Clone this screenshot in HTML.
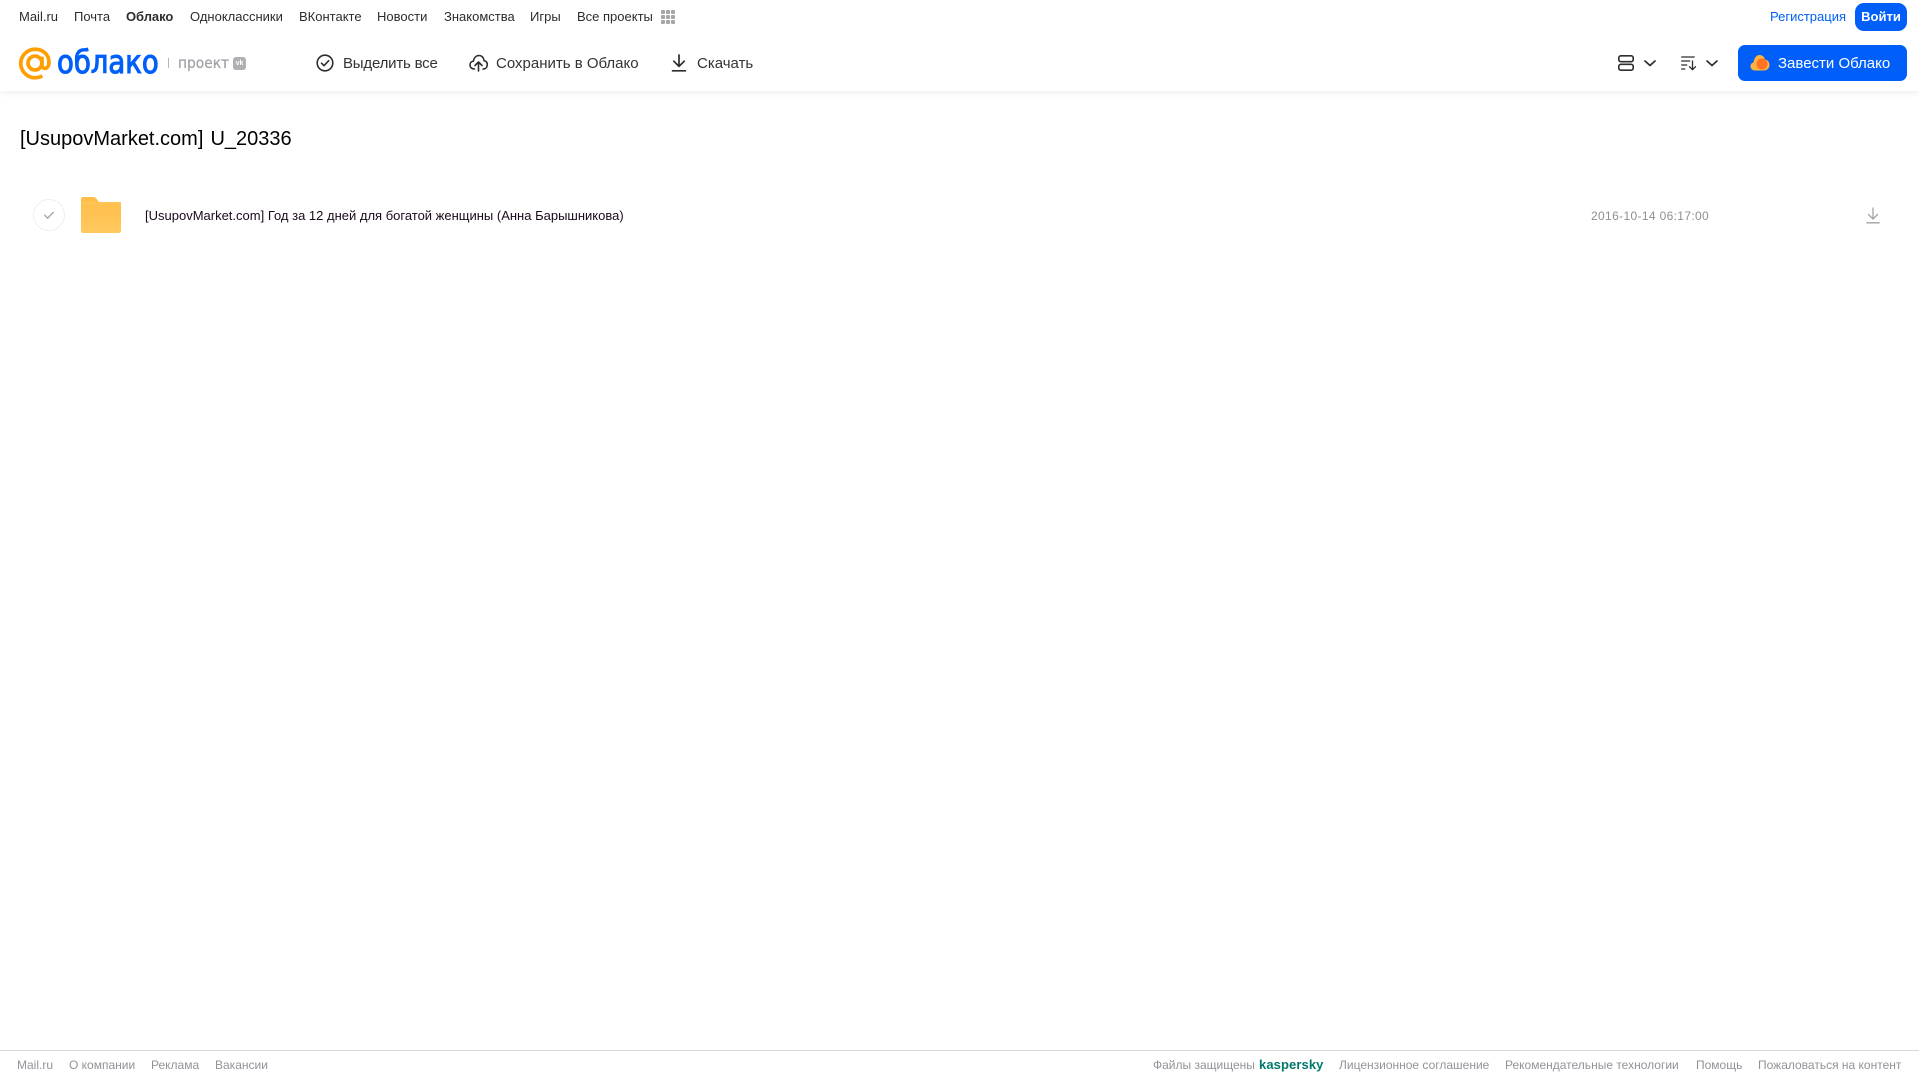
<!DOCTYPE html>
<html lang="ru">
<head>
<meta charset="utf-8">
<title>Облако</title>
<style>
html,body{margin:0;padding:0;background:#fff}
body{position:relative;width:1919px;height:1079px;overflow:hidden;font-family:"Liberation Sans","DejaVu Sans",sans-serif}
.t{position:absolute;white-space:nowrap;line-height:20px}
.n{top:7px;font-size:13px;color:#2c2d2e}
.a{top:54px;font-size:15px;color:#333}
.f{top:1055px;font-size:12px;color:#919399}
svg{position:absolute;overflow:visible}
#hd{position:absolute;left:0;top:0;width:1919px;height:91px;background:#fff;box-shadow:0 2px 6px rgba(0,0,0,.07)}
#fl{position:absolute;left:0;top:1050px;width:1919px;height:1px;background:#d8d8d8}
.b{position:absolute;background:#005ff9}
</style>
</head>
<body>
<div id="hd"></div>

<div class="t n" style="left:19px">Mail.ru</div>
<div class="t n" style="left:74px">Почта</div>
<div class="t n" style="left:126px;font-weight:bold;letter-spacing:-.05px">Облако</div>
<div class="t n" style="left:190px">Одноклассники</div>
<div class="t n" style="left:299px">ВКонтакте</div>
<div class="t n" style="left:377px">Новости</div>
<div class="t n" style="left:444px">Знакомства</div>
<div class="t n" style="left:530px">Игры</div>
<div class="t n" style="left:577px">Все проекты</div>
<svg style="left:661px;top:10px" width="14" height="14" fill="#a6a6a6"><rect width="4" height="4" rx="1"/><rect x="5" width="4" height="4" rx="1"/><rect x="10" width="4" height="4" rx="1"/><rect y="5" width="4" height="4" rx="1"/><rect x="5" y="5" width="4" height="4" rx="1"/><rect x="10" y="5" width="4" height="4" rx="1"/><rect y="10" width="4" height="4" rx="1"/><rect x="5" y="10" width="4" height="4" rx="1"/><rect x="10" y="10" width="4" height="4" rx="1"/></svg>

<svg style="left:19px;top:47px" width="32" height="33" viewBox="0 0 33 33" fill="none" stroke="#ff9e00" stroke-width="3.800"><circle cx="16.500" cy="16" r="7.200"/><path d="M23.700 9.500v8.500c0 5 7 5 7.200-2.500C31 7 24.500 1.800 16.500 1.800 8.500 1.800 1.800 8.500 1.800 16.500s6.700 14.700 14.700 14.700c2.800 0 5.300-.7 7.500-2"/></svg>
<div class="t" style="left:57px;top:43px;line-height:38px;font-size:32px;color:#005ff9;font-family:'DejaVu Sans',sans-serif;-webkit-text-stroke:1.100px #005ff9;transform-origin:0 50%;transform:scaleX(.86)">облако</div>
<div style="position:absolute;left:168px;top:58px;width:1px;height:10px;background:#b5b5b5"></div>
<div class="t" style="left:178px;top:53px;font-size:15px;color:#a2a4a9;font-family:'DejaVu Sans',sans-serif;-webkit-text-stroke:.3px #a2a4a9;transform-origin:0 50%;transform:scaleX(.92)">проект</div>
<div style="position:absolute;left:233px;top:57px;width:13px;height:13px;border-radius:3px;background:#aeb0b4"></div>
<div class="t" style="left:233px;top:57px;width:13px;line-height:13px;font-size:7px;font-weight:bold;color:#fff;text-align:center">vk</div>

<svg style="left:316px;top:54px" width="18" height="18" viewBox="0 0 18 18" fill="none" stroke="#2c2d2e" stroke-width="1.600"><circle cx="9" cy="9" r="7.800"/><path d="M5.500 9.200l2.500 2.500 4.700-5" stroke-linecap="round" stroke-linejoin="round"/></svg>
<div class="t a" style="left:343px;letter-spacing:-.2px">Выделить все</div>

<svg style="left:469px;top:54px" width="19" height="18" viewBox="0 0 19 18" fill="none" stroke="#2c2d2e" stroke-width="1.600" stroke-linecap="round" stroke-linejoin="round"><path d="M5.500 15C2.800 15 1 13.300 1 11c0-2.200 1.500-3.600 3.300-3.800C5 4 7 1.500 9.800 1.500c3 0 5 2.200 5.300 5.200 2 .4 3.200 2 3.200 4 0 2.300-1.500 4.300-4.300 4.300"/><path d="M9.500 17V8.500M6 11.500l3.500-3.500 3.500 3.500"/></svg>
<div class="t a" style="left:496px">Сохранить в Облако</div>

<svg style="left:671px;top:54px" width="16" height="18" viewBox="0 0 16 18" fill="none" stroke="#2c2d2e" stroke-width="1.700" stroke-linecap="round" stroke-linejoin="round"><path d="M8 1v11M2.800 7.200L8 12.400l5.200-5.200M1.500 16.800h13"/></svg>
<div class="t a" style="left:697px">Скачать</div>

<svg style="left:1618px;top:55px" width="16" height="16" viewBox="0 0 16 16" fill="none" stroke="#2c2d2e" stroke-width="1.600"><rect x=".8" y=".8" width="14.400" height="5.900" rx="2"/><rect x=".8" y="9.300" width="14.400" height="5.900" rx="2"/></svg>
<svg style="left:1644px;top:60px" width="12" height="7" viewBox="0 0 12 7" fill="none" stroke="#2c2d2e" stroke-width="1.700" stroke-linecap="round" stroke-linejoin="round"><path d="M1 1l5 4.500L11 1"/></svg>
<svg style="left:1681px;top:56px" width="16" height="15" viewBox="0 0 16 15" fill="none" stroke="#2c2d2e" stroke-width="1.300" stroke-linecap="round" stroke-linejoin="round"><path d="M.7 1h12.500M.7 5h8M.7 9h5M.7 13h3M11.500 5v8.500M8.500 10.700l3 3 3-3"/></svg>
<svg style="left:1706px;top:60px" width="12" height="7" viewBox="0 0 12 7" fill="none" stroke="#2c2d2e" stroke-width="1.700" stroke-linecap="round" stroke-linejoin="round"><path d="M1 1l5 4.500L11 1"/></svg>

<div class="t" style="left:1770px;top:7px;font-size:13px;color:#005ff9">Регистрация</div>
<div class="b" style="left:1855px;top:3px;width:52px;height:28px;border-radius:9px"></div>
<div class="t" style="left:1855px;top:7px;width:52px;text-align:center;font-size:13px;font-weight:bold;color:#fff">Войти</div>
<div class="b" style="left:1738px;top:45px;width:169px;height:36px;border-radius:7px"></div>
<svg style="left:1750px;top:54px" width="20" height="17" viewBox="0 0 20 17"><path d="M5 16.500C2 16.500 .5 14.500.5 12.300c0-2 1.300-3.500 3-3.900C4 4.500 6 1 9.500 1c3 0 5 2 5.500 4.500 2.700.3 4.500 2.500 4.500 5.400 0 3-2.200 5.600-5.500 5.600z" fill="#ffb23e"/><circle cx="12" cy="10" r="5.500" fill="#ff6b1f" opacity=".9"/></svg>
<div class="t" style="left:1778px;top:54px;font-size:15px;color:#fff">Завести Облако</div>

<div class="t" style="left:20px;top:126px;line-height:26px;font-size:20px;color:#000;word-spacing:1.500px">[UsupovMarket.com] U_20336</div>

<svg style="left:33px;top:199px" width="32" height="32" viewBox="0 0 32 32" fill="none"><circle cx="16" cy="16" r="15.500" stroke="#efefef"/><path d="M11.800 16.300l2.900 2.900 5.500-5.800" stroke="#a3a5a9" stroke-width="1.400" stroke-linecap="round" stroke-linejoin="round"/></svg>
<svg style="left:81px;top:197px" width="40" height="36" viewBox="0 0 40 36"><defs><linearGradient id="g" x1="0" y1="0" x2="0" y2="1"><stop offset="0" stop-color="#ffbd47"/><stop offset="1" stop-color="#ffc95f"/></linearGradient></defs><path d="M2 0h10c2 0 3 1 4.500 3L18 5h20c1.100 0 2 .9 2 2v27c0 1.100-.9 2-2 2H2c-1.100 0-2-.9-2-2V2C0 .9.900 0 2 0z" fill="url(#g)"/><path d="M0 5h16l2 0h22v2.500H0z" fill="#ffc556"/></svg>
<div class="t" style="left:145px;top:206px;font-size:13px;color:#1a0a1a">[UsupovMarket.com] Год за 12 дней для богатой женщины (Анна Барышникова)</div>
<div class="t" style="left:1591px;top:206px;font-size:12px;color:#8f8f8f;letter-spacing:.35px">2016-10-14 06:17:00</div>
<svg style="left:1866px;top:207px" width="14" height="17" viewBox="0 0 14 17" fill="none" stroke="#a3a3a3" stroke-width="1.300" stroke-linecap="round" stroke-linejoin="round"><path d="M7 1v11M2.500 7.500L7 12l4.500-4.500M.8 15.800h12.400"/></svg>

<div id="fl"></div>
<div class="t f" style="left:17px">Mail.ru</div>
<div class="t f" style="left:69px">О компании</div>
<div class="t f" style="left:151px">Реклама</div>
<div class="t f" style="left:215px">Вакансии</div>
<div class="t f" style="left:1153px">Файлы защищены</div>
<div class="t" style="left:1259px;top:1055px;font-size:13px;font-weight:bold;color:#00796a;letter-spacing:.1px">kaspersky</div>
<div class="t f" style="left:1339px">Лицензионное соглашение</div>
<div class="t f" style="left:1505px">Рекомендательные технологии</div>
<div class="t f" style="left:1696px">Помощь</div>
<div class="t f" style="left:1758px">Пожаловаться на контент</div>
</body>
</html>
